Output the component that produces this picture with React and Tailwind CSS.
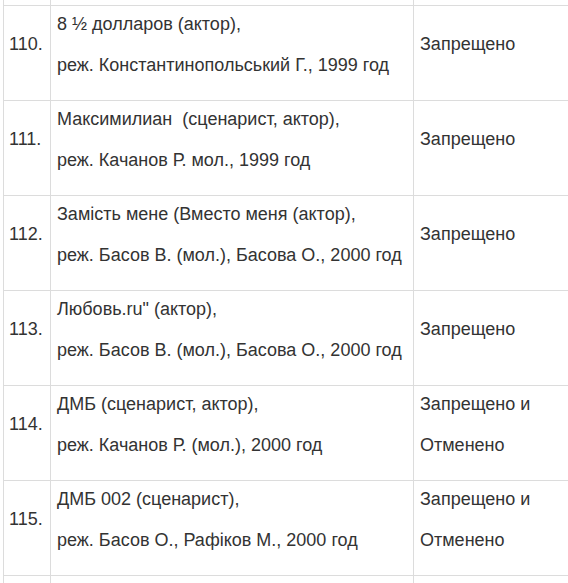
import React from "react";

const rows = [
  { n: "110.", a: "8 ½ долларов (актор),", b: "реж. Константинопольський Г., 1999 год", s: ["Запрещено"] },
  { n: "111.", a: "Максимилиан \u00a0(сценарист, актор),", b: "реж. Качанов Р. мол., 1999 год", s: ["Запрещено"] },
  { n: "112.", a: "Замість мене (Вместо меня (актор),", b: "реж. Басов В. (мол.), Басова О., 2000 год", s: ["Запрещено"] },
  { n: "113.", a: "Любовь.ru\" (актор),", b: "реж. Басов В. (мол.), Басова О., 2000 год", s: ["Запрещено"] },
  { n: "114.", a: "ДМБ (сценарист, актор),", b: "реж. Качанов Р. (мол.), 2000 год", s: ["Запрещено и", "Отменено"] },
  { n: "115.", a: "ДМБ 002 (сценарист),", b: "реж. Басов О., Рафіков М., 2000 год", s: ["Запрещено и", "Отменено"] },
  { n: "", a: "", b: "", s: [""] },
];

function Cell({ lines, className }) {
  return (
    <div className={"flex flex-col justify-center gap-[17px] pb-[18px] border-r border-[#dcdcdc] " + className}>
      {lines.map((l, i) => (
        <div key={i} className="leading-[24px] whitespace-nowrap">{l}</div>
      ))}
    </div>
  );
}

export default function App() {
  return (
    <div
      className="w-[568px] h-[583px] overflow-hidden bg-white text-[18px] text-[#333333]"
      style={{ fontFamily: '"Liberation Sans", Arial, sans-serif' }}
    >
      <div className="ml-[3px] w-[570px]">
        <div className="grid grid-cols-[47px_363px_1fr] h-[6px] border-l border-b border-[#dcdcdc]">
          <div className="border-r border-[#dcdcdc]" />
          <div className="border-r border-[#dcdcdc]" />
          <div className="border-r border-[#dcdcdc]" />
        </div>
        {rows.map((r, i) => (
          <div key={i} className="grid grid-cols-[47px_363px_1fr] h-[95px] border-l border-b border-[#dcdcdc]">
            <Cell lines={[r.n]} className="pl-[5px]" />
            <Cell lines={[r.a, r.b]} className="pl-[6px]" />
            <Cell lines={r.s} className="pl-[6px]" />
          </div>
        ))}
      </div>
    </div>
  );
}
